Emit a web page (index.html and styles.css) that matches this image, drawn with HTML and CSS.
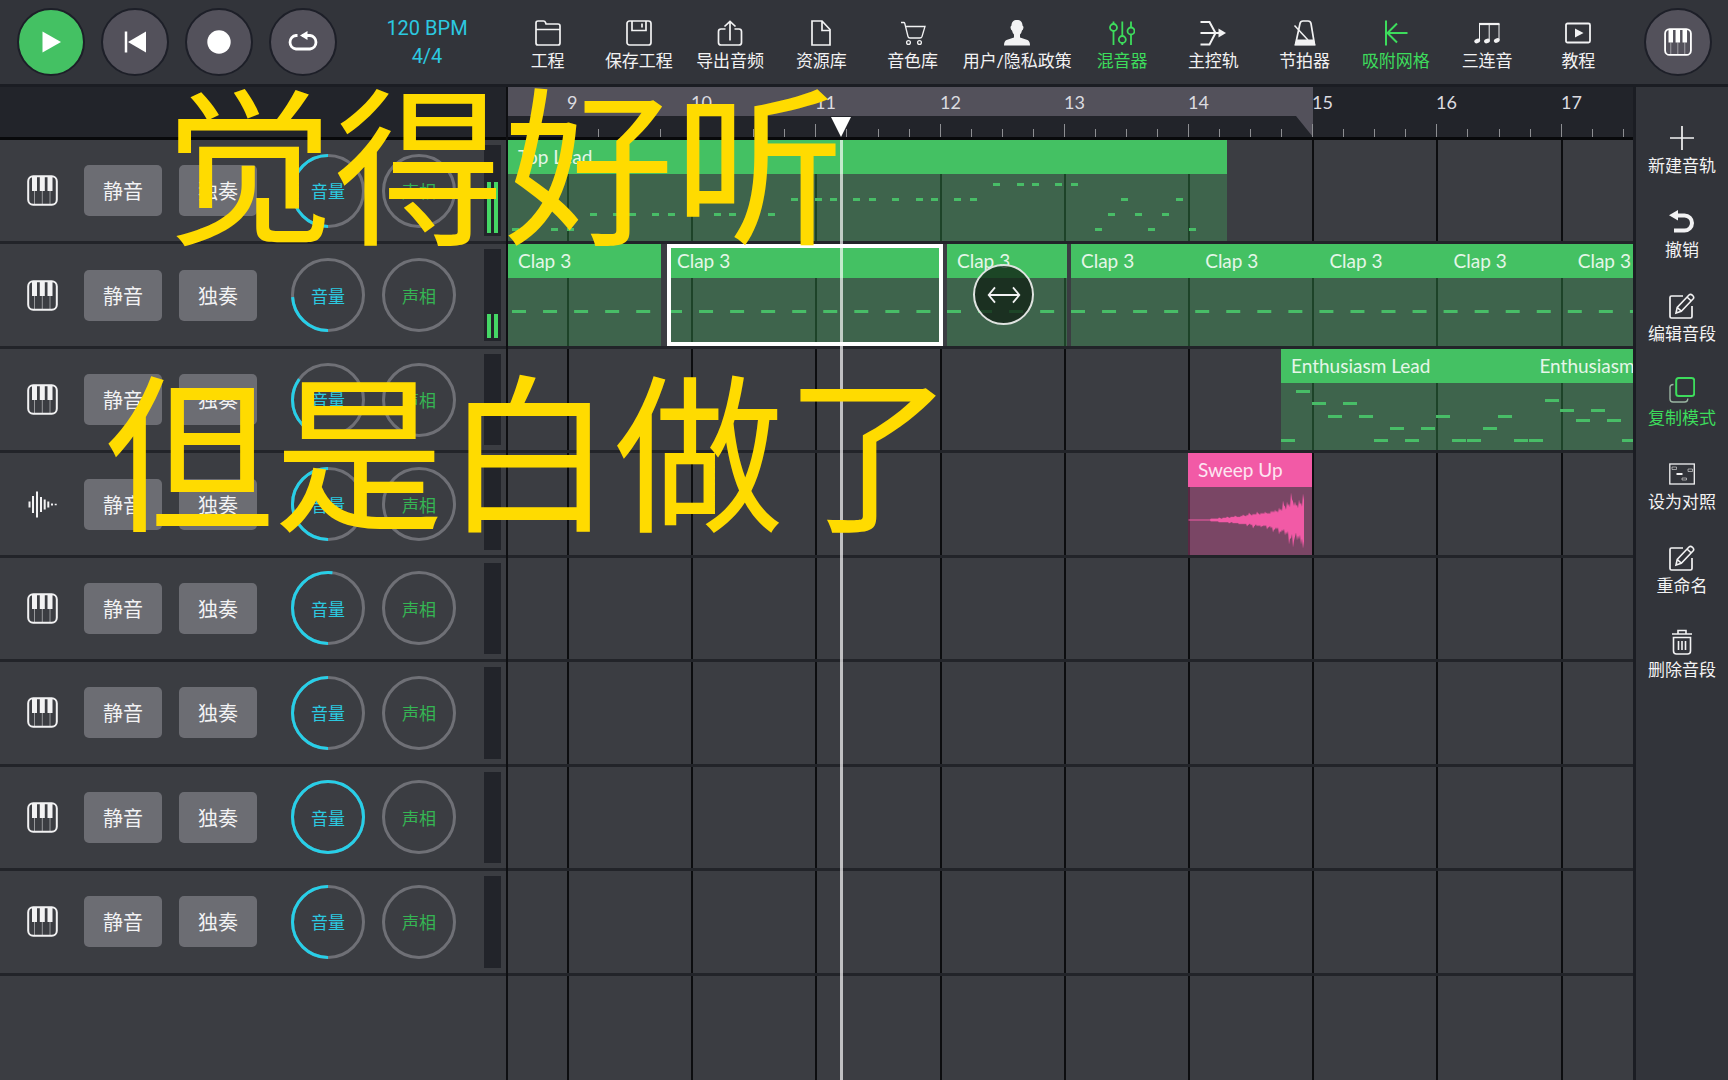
FILE: index.html
```html
<!DOCTYPE html>
<html lang="zh-CN">
<head>
<meta charset="utf-8">
<meta name="viewport" content="width=device-width, initial-scale=1">
<title>音轨编辑</title>
<link rel="stylesheet" href="styles.css">
</head>
<body>
<svg class="defs" aria-hidden="true">
  <symbol id="i-piano" viewBox="0 0 31 31">
    <rect x="1.2" y="1.2" width="28.6" height="28.6" rx="5" fill="none" stroke="currentColor" stroke-width="2"/>
    <path d="M5 1h5v15H5zM12.800 1h5v15h-5zM20.500 1h5v15h-5z" fill="currentColor"/>
    <path d="M7.500 16v13M15.300 16v13M23 16v13" stroke="currentColor" stroke-width="1" opacity=".5"/>
  </symbol>
  <symbol id="i-wave" viewBox="0 0 31 31">
    <path d="M2.500 12.500v6M6 7v17M10 2.500v26M14 8v15M17.700 10.500v10M21.300 12.500v6M25 14.500v2M28.700 14.700v1.600" stroke="currentColor" stroke-width="2"/>
  </symbol>
  <symbol id="i-folder" viewBox="0 0 26 26">
    <path d="M1 22V3Q1 1 3 1H8.500Q10 1 10.500 2.500L11 4H23Q25 4 25 6V23Q25 25 23 25H3Q1 25 1 23V9.500H25" fill="none" stroke="currentColor" stroke-width="1.700"/>
  </symbol>
  <symbol id="i-save" viewBox="0 0 26 26">
    <rect x="1" y="1" width="24" height="24" rx="2.500" fill="none" stroke="currentColor" stroke-width="1.700"/>
    <path d="M6 1v9.500h14V1M16 3.500v4" fill="none" stroke="currentColor" stroke-width="1.700"/>
  </symbol>
  <symbol id="i-export" viewBox="0 0 26 26">
    <path d="M8.500 9H4Q1.500 9 1.500 11.500V22.500Q1.500 25 4 25H22Q24.500 25 24.500 22.500V11.500Q24.500 9 22 9H17.500M13 20.500V1.500M7.500 6.500L13 1.300L18.500 6.500" fill="none" stroke="currentColor" stroke-width="1.700"/>
  </symbol>
  <symbol id="i-file" viewBox="0 0 26 26">
    <path d="M4 1H14L22 9.500V25H4ZM14 1V10.500H22" fill="none" stroke="currentColor" stroke-width="1.700"/>
  </symbol>
  <symbol id="i-cart" viewBox="0 0 26 26">
    <path d="M1 2.500H3.800Q4.500 2.500 4.800 3.500L8 16.500Q8.300 18 10 18H20Q21.500 18 22 16.500L25 6.500H5.700" fill="none" stroke="currentColor" stroke-width="1.300"/>
    <circle cx="8.500" cy="22.500" r="1.900" fill="none" stroke="currentColor" stroke-width="1.300"/>
    <circle cx="19.500" cy="22.500" r="1.900" fill="none" stroke="currentColor" stroke-width="1.300"/>
  </symbol>
  <symbol id="i-user" viewBox="0 0 26 26">
    <path d="M13 0C9.500 0 7.500 2 7.500 5.500Q6.300 6 6.600 8Q7 10 8 10.500Q8.500 13 10 14.500V17.500L2.500 20Q0 21 0 25.500H26Q26 21 23.500 20L16 17.500V14.500Q17.500 13 18 10.500Q19 10 19.400 8Q19.700 6 18.500 5.500C18.500 2 16.500 0 13 0Z" fill="currentColor"/>
  </symbol>
  <symbol id="i-mixer" viewBox="0 0 26 26">
    <path d="M4.500 1.500V4M4.500 11V25M13.300 1.500V16M13.300 23V25M22 1.500V7.500M22 14.500V25" stroke="currentColor" stroke-width="1.800"/>
    <g fill="none" stroke="currentColor" stroke-width="1.800"><circle cx="4.500" cy="7.500" r="3.500"/><circle cx="13.300" cy="19.500" r="3.500"/><circle cx="22" cy="11" r="3.500"/></g>
  </symbol>
  <symbol id="i-master" viewBox="0 0 26 26">
    <path d="M.5 2H9.500L15.500 13L9.500 24.500H.5M.5 13H20" fill="none" stroke="currentColor" stroke-width="2"/>
    <path d="M18.500 8.500L26 13L18.500 17.500Z" fill="currentColor"/>
  </symbol>
  <symbol id="i-metro" viewBox="0 0 26 26">
    <path d="M3.500 24.500L8 3.500Q8.500 1 11 1H16Q18.500 1 19 3.500L22.500 24.500Z" fill="none" stroke="currentColor" stroke-width="1.700"/>
    <path d="M4.500 19.500H21.800L23.500 25.500H2.500Z" fill="currentColor"/>
    <path d="M2.500 5.500L16 20" stroke="currentColor" stroke-width="1.500"/>
  </symbol>
  <symbol id="i-snap" viewBox="0 0 26 26">
    <path d="M3 .5V25.500M3.500 13H24.500M14 3.500L4.500 13L14 22.500" fill="none" stroke="currentColor" stroke-width="2"/>
  </symbol>
  <symbol id="i-triplet" viewBox="0 0 26 26">
    <path d="M5.500 21V4H25V20M15.200 4V20.500" fill="none" stroke="currentColor" stroke-width="1"/>
    <path d="M5 4H25.500" stroke="currentColor" stroke-width="2.200"/>
    <g fill="currentColor"><ellipse cx="3.200" cy="21" rx="3" ry="2.200" transform="rotate(-20 3.200 21)"/><ellipse cx="13" cy="21" rx="3" ry="2.200" transform="rotate(-20 13 21)"/><ellipse cx="22.800" cy="20.500" rx="3" ry="2.200" transform="rotate(-20 22.800 20.500)"/></g>
  </symbol>
  <symbol id="i-video" viewBox="0 0 26 26">
    <rect x="1" y="3.500" width="24" height="19" rx="1.500" fill="none" stroke="currentColor" stroke-width="1.800"/>
    <path d="M10 8.500L18.500 13L10 17.500Z" fill="currentColor"/>
  </symbol>
  <symbol id="i-plus" viewBox="0 0 26 26">
    <path d="M13 1V25M1 13H25" stroke="currentColor" stroke-width="1.700"/>
  </symbol>
  <symbol id="i-undo" viewBox="0 0 26 26">
    <path d="M6 6.500H15.500A7.500 7.500 0 0 1 15.500 21.500H5" fill="none" stroke="currentColor" stroke-width="4"/>
    <path d="M0 6.300L9 1V11.500Z" fill="currentColor"/>
  </symbol>
  <symbol id="i-edit" viewBox="0 0 26 26">
    <path d="M14 3H2.500Q1 3 1 4.500V23.500Q1 25 2.500 25H21.500Q23 25 23 23.500V13" fill="none" stroke="currentColor" stroke-width="1.700"/>
    <path d="M7 20L8.200 14.500L20 2Q21.500 .5 23.500 2.300Q25.500 4.300 24.200 5.800L12.300 18.200ZM18 4L22.300 8M8.200 14.500L12.300 18.200" fill="none" stroke="currentColor" stroke-width="1.600"/>
  </symbol>
  <symbol id="i-copy" viewBox="0 0 26 26">
    <rect x="7.200" y="1" width="18" height="18" rx="2.500" fill="none" stroke="currentColor" stroke-width="2"/>
    <path d="M4.500 7.500Q1 7.500 1 10.500V22Q1 25 4 25H15.500Q18.800 25 18.800 21.500" fill="none" stroke="#9bb5a2" stroke-width="1.400"/>
  </symbol>
  <symbol id="i-compare" viewBox="0 0 26 26">
    <rect x=".8" y="3" width="24.500" height="20" fill="none" stroke="currentColor" stroke-width="1.300"/>
    <path d="M7.500 13H13.500" stroke="currentColor" stroke-width="2"/>
    <path d="M3 6H7.500V8.500H3ZM19 8H23.500V10.500H19ZM13 17H17.500V19H13Z" fill="none" stroke="currentColor" stroke-width=".8" opacity=".7"/>
  </symbol>
  <symbol id="i-trash" viewBox="0 0 26 26">
    <path d="M3 5H23M9 5V1.500H17V5M4.500 8.500H21.500V22Q21.500 25 18.500 25H7.500Q4.500 25 4.500 22ZM9.500 12V21M13 12V21M16.500 12V21" fill="none" stroke="currentColor" stroke-width="1.600"/>
  </symbol>
</svg>

<div class="app">
  <header class="topbar">
    <div class="transport">
      <button class="round play" aria-label="播放"><svg viewBox="0 0 32 32"><path d="M7.500 5.500L26 16L7.500 26.500Z" fill="currentColor"/></svg></button>
      <button class="round" aria-label="回到开头"><svg viewBox="0 0 32 32"><path d="M7 5.500V26.500" stroke="currentColor" stroke-width="2.500"/><path d="M27 5.500V26.500L9 16Z" fill="currentColor"/></svg></button>
      <button class="round" aria-label="录音"><svg viewBox="0 0 32 32"><circle cx="16" cy="16" r="11.700" fill="currentColor"/></svg></button>
      <button class="round" aria-label="循环"><svg viewBox="0 0 32 32"><path d="M10.500 9.500H9A6.800 6.800 0 0 0 9 23H23A6.800 6.800 0 0 0 23 9.500H15" fill="none" stroke="currentColor" stroke-width="2.800"/><path d="M13 9.500L20.500 5V14Z" fill="currentColor"/></svg></button>
    </div>
    <button class="tempo"><span>120 BPM</span><span>4/4</span></button>
    <nav class="tools">
      <button class="tool"><svg><use href="#i-folder"/></svg><span>工程</span></button>
      <button class="tool"><svg><use href="#i-save"/></svg><span>保存工程</span></button>
      <button class="tool"><svg><use href="#i-export"/></svg><span>导出音频</span></button>
      <button class="tool"><svg><use href="#i-file"/></svg><span>资源库</span></button>
      <button class="tool"><svg><use href="#i-cart"/></svg><span>音色库</span></button>
      <button class="tool wide"><svg><use href="#i-user"/></svg><span>用户/隐私政策</span></button>
      <button class="tool on"><svg><use href="#i-mixer"/></svg><span>混音器</span></button>
      <button class="tool"><svg><use href="#i-master"/></svg><span>主控轨</span></button>
      <button class="tool"><svg><use href="#i-metro"/></svg><span>节拍器</span></button>
      <button class="tool on"><svg><use href="#i-snap"/></svg><span>吸附网格</span></button>
      <button class="tool"><svg><use href="#i-triplet"/></svg><span>三连音</span></button>
      <button class="tool"><svg><use href="#i-video"/></svg><span>教程</span></button>
    </nav>
    <button class="round keys" aria-label="键盘"><svg><use href="#i-piano"/></svg></button>
  </header>

  <main class="workspace">
    <section class="rack" aria-label="音轨">
      <div class="corner"></div>
      <div class="rows" id="rack"></div>
    </section>

    <section class="timeline" aria-label="时间线">
      <div class="ruler" id="ruler"><div class="loop"></div></div>
      <div class="rows lanes" id="lanes"></div>
      <div class="playhead"></div>
      <button class="handle" aria-label="调整长度"><svg viewBox="0 0 36 20"><path d="M1 10H35M8 1.500L1 10L8 18.500M28 1.500L35 10L28 18.500" fill="none" stroke="currentColor" stroke-width="2"/></svg></button>
    </section>

    <aside class="side">
      <button class="tool"><svg><use href="#i-plus"/></svg><span>新建音轨</span></button>
      <button class="tool"><svg><use href="#i-undo"/></svg><span>撤销</span></button>
      <button class="tool"><svg><use href="#i-edit"/></svg><span>编辑音段</span></button>
      <button class="tool on"><svg><use href="#i-copy"/></svg><span>复制模式</span></button>
      <button class="tool"><svg><use href="#i-compare"/></svg><span>设为对照</span></button>
      <button class="tool"><svg><use href="#i-edit"/></svg><span>重命名</span></button>
      <button class="tool"><svg><use href="#i-trash"/></svg><span>删除音段</span></button>
    </aside>
  </main>

  <p class="caption first">觉得好听</p>
  <p class="caption second">但是白做了</p>
</div>
<script src="app.js"></script>
</body>
</html>
```
FILE: styles.css
```css
:root {
  --bar: #32343a;
  --row: #3b3d42;
  --deep: #22242a;
  --edge: #1b1d23;
  --pad: #53515b;
  --green: #44c163;
  --lit: #3ddc5c;
  --cyan: #2cc9e0;
  --pink: #f25aa6;
  --ink: #f2f2f3;
}

* { box-sizing: border-box; }

body {
  margin: 0;
  background: var(--row);
  color: var(--ink);
  font-family: Roboto, "Noto Sans CJK SC", sans-serif;
}

button {
  margin: 0;
  padding: 0;
  border: 0;
  background: none;
  color: inherit;
  font: inherit;
  cursor: pointer;
}

svg { display: block; }
.defs { position: absolute; width: 0; height: 0; }

.app {
  position: relative;
  display: flex;
  flex-direction: column;
  height: 100vh;
  min-height: 800px;
  overflow: hidden;
}

/* top bar */
.topbar {
  display: flex;
  align-items: center;
  height: 87px;
  padding: 0 16px 0 17px;
  background: var(--bar);
  border-bottom: 3px solid var(--edge);
}
.transport { display: flex; gap: 16px; }
.round {
  display: grid;
  place-items: center;
  flex: none;
  width: 68px;
  height: 68px;
  border: 2px solid #1d1f28;
  border-radius: 50%;
  background: var(--pad);
  color: #fff;
}
.round svg { width: 32px; height: 32px; }
.round.keys svg { width: 28px; height: 28px; }
.play { background: var(--green); }
.tempo {
  display: flex;
  flex-direction: column;
  width: 165px;
  padding-left: 15px;
  color: var(--cyan);
  font-size: 20px;
  line-height: 28px;
}
.tools { display: flex; flex: 1; padding: 7px 20px 0 0; }

.tool {
  display: flex;
  flex: 1 1 91px;
  flex-direction: column;
  align-items: center;
  gap: 5px;
  font-size: 17px;
  line-height: 20px;
  white-space: nowrap;
}
.tool svg { width: 26px; height: 26px; }
.tool.wide { flex-basis: 118px; }
.tool.on { color: var(--lit); }

/* workspace */
.workspace { display: flex; flex: 1; min-height: 0; }
.rack {
  display: flex;
  flex: none;
  flex-direction: column;
  width: 508px;
  border-right: 2px solid #0e0f12;
}
.corner, .ruler {
  flex: none;
  height: 53px;
  background: var(--deep);
  border-bottom: 3px solid #08090b;
}
.rows {
  display: grid;
  flex: 1;
  grid-template-rows: repeat(9, 1fr);
  min-height: 0;
}
.track, .lane { min-height: 0; border-bottom: 3px solid #222429; }
.track {
  display: flex;
  align-items: center;
  padding: 0 5px 0 27px;
}
.track > svg { flex: none; width: 31px; height: 31px; margin-right: 26px; }
.toggle {
  width: 78px;
  height: 51px;
  margin-right: 17px;
  border-radius: 5px;
  background: #6c6d73;
  font-size: 20px;
}
.knob {
  position: relative;
  display: grid;
  place-items: center;
  width: 74px;
  height: 74px;
  margin-left: 17px;
  font-size: 17px;
  color: var(--cyan);
}
.knob.pan { color: #35b553; }
.knob svg, .knob input { position: absolute; inset: 0; width: 100%; height: 100%; margin: 0; }
.knob input { opacity: 0; }
.knob circle { fill: none; stroke: #6f7076; stroke-width: 3; }
.knob .arc { stroke: #27cfe8; }
.meter {
  display: flex;
  align-items: flex-end;
  align-self: stretch;
  gap: 3px;
  width: 17px;
  margin: 5px 0 5px auto;
  padding: 3px;
  background: var(--deep);
}
.meter i { flex: 1; background: #45d765; }

/* timeline */
.timeline {
  position: relative;
  display: flex;
  flex: 1;
  flex-direction: column;
  min-width: 0;
  overflow: hidden;
}
.ruler { position: relative; font: 18px/20px Lato, sans-serif; }
.loop {
  width: 805px;
  height: 50px;
  background: var(--pad);
  clip-path: polygon(0 0, 100% 0, 100% 100%, calc(100% - 17px) 29px, 0 29px);
}
.tick {
  position: absolute;
  bottom: 0;
  width: 1px;
  height: 8px;
  background: #8d8e92;
}
.tick.major { height: 13px; }
.num { position: absolute; top: 5px; color: #dcdce0; }
.lanes { position: relative; }
.gridline {
  position: absolute;
  top: 0;
  bottom: 0;
  width: 2px;
  background: #0c0d0f;
}
.lane { position: relative; }
.clip {
  position: absolute;
  top: 0;
  bottom: 0;
  overflow: hidden;
  background: rgb(68 193 99 / 30%);
}
.clip header {
  display: flex;
  height: 34px;
  padding-left: 10px;
  background: var(--green);
  font: 19px/34px Lato, sans-serif;
  color: #e4f6e8;
  white-space: nowrap;
}
.clip header span { flex: none; }
.clip svg { width: 100%; overflow: visible; }
.clip rect { fill: #48bd67; }
.clip.audio { background: rgb(242 90 166 / 35%); }
.clip.audio header { background: var(--pink); color: #fde6f2; }
.clip.audio path { fill: var(--pink); }
.clip.selected::after {
  content: "";
  position: absolute;
  inset: 0;
  border: 4px solid #fff;
}
.playhead {
  position: absolute;
  top: 53px;
  bottom: 0;
  left: 332px;
  width: 3px;
  background: rgb(255 255 255 / 68%);
}
.playhead::before {
  content: "";
  position: absolute;
  top: -23px;
  left: -9px;
  width: 20px;
  height: 20px;
  background: #fff;
  clip-path: polygon(0 0, 100% 0, 50% 100%);
}
.handle {
  position: absolute;
  top: 177px;
  left: 465px;
  display: grid;
  place-items: center;
  width: 61px;
  height: 61px;
  border: 2px solid #dfe3e0;
  border-radius: 50%;
  background: rgb(16 32 20 / 76%);
}
.handle svg { width: 36px; height: 18px; }

/* side bar */
.side {
  display: flex;
  flex: none;
  flex-direction: column;
  gap: 33px;
  width: 95px;
  padding-top: 38px;
  background: var(--bar);
  border-left: 3px solid var(--edge);
}
.side .tool { flex: none; }

/* captions over the whole screen */
.caption {
  position: absolute;
  margin: 0;
  color: #ffdb00;
  font: 170px/170px "Noto Sans CJK SC", sans-serif;
  white-space: nowrap;
  pointer-events: none;
}
.first { top: 73px; left: 164px; }
.second { top: 360px; left: 104px; }
```
FILE: app.js
```js
const BAR = 124.2;          // pixels per bar
const FIRST_BAR = 59;       // x of bar 9
const NS = 'http://www.w3.org/2000/svg';

const pairs = (w, y, xs) => xs.map(x => [x, y, w]);
const steps = (from, count) => Array.from({ length: count }, (_, i) => [from + i * BAR / 4, 33, 14]);

const tracks = [
  { volume: 50, meter: 51, clips: [{ x: 0, w: 719, name: 'Top Lead', notes: [
    ...pairs(7, 10, [485, 509, 524, 547, 563]),
    ...pairs(7, 25, [283, 307, 322, 345, 361, 384, 408, 423, 446, 462, 613, 668]),
    ...pairs(7, 40, [82, 105, 121, 144, 160, 206, 221, 260, 600, 627, 654]),
    ...pairs(7, 55, [4, 43, 59, 587, 640, 681])] }] },
  { volume: 24, meter: 24, clips: [
    { x: 0, w: 153, name: 'Clap 3', notes: steps(4, 5) },
    { x: 159, w: 276, name: 'Clap 3', selected: true, notes: steps(1, 9) },
    { x: 439, w: 120, name: 'Clap 3', notes: steps(0, 4) },
    { x: 563, w: 621, name: 'Clap 3', loop: BAR, notes: steps(0, 20) }] },
  { volume: 35, clips: [{ x: 773, w: 497, name: 'Enthusiasm Lead', loop: BAR * 2, notes: [
    [0, 57], [15, 8], [31, 20], [47, 33], [62, 20], [78, 33], [93, 57], [109, 45], [124, 57],
    [140, 45], [155, 33], [171, 57], [186, 57], [202, 45], [217, 33], [233, 57], [248, 57],
    [264, 17], [279, 27], [295, 37], [310, 27], [326, 37], [341, 57]].map(n => [...n, 14]) }] },
  { volume: 50, audio: true, clips: [{ x: 680, w: 124, name: 'Sweep Up', wave: true }] },
  { volume: 52, clips: [] },
  { volume: 50, clips: [] },
  { volume: 100, clips: [] },
  { volume: 50, clips: [] }
];

const knob = (label, cls, value) => `
  <label class="knob ${cls}">
    <svg viewBox="0 0 74 74" aria-hidden="true">
      <circle cx="37" cy="37" r="35.5"/>
      ${cls === 'vol' ? `<circle class="arc" cx="37" cy="37" r="35.5" pathLength="100" stroke-dasharray="${value} ${100 - value}" transform="rotate(90 37 37)"/>` : ''}
    </svg>
    <span>${label}</span>
    <input type="range" min="0" max="100" value="${value}">
  </label>`;

// Peaks of the riser sample, one pair (up, down) every 2px
const peaks = [[0,0],[0,0],[0,0],[0,0],[0,0],[0,0],[0,0],[0,0],[0,0],[0,0],[0,0],[1,1],[1,1],[1,1],[1,1],[2,2],
  [1,2],[2,2],[2,2],[3,2],[2,3],[3,2],[3,3],[4,3],[3,3],[3,4],[4,4],[5,4],[4,4],[5,6],[7,4],[5,5],[6,8],[6,5],[8,6],
  [6,6],[7,7],[7,6],[8,6],[7,9],[7,7],[9,8],[9,12],[10,9],[9,9],[12,14],[11,12],[19,11],[13,15],[18,14],[16,24],[27,18],
  [18,27],[18,16],[15,20],[20,19],[17,24],[26,28]];

function wavePath() {
  const mid = 33;
  let up = `M0 ${mid}`, down = '';
  peaks.forEach(([a, b], i) => {
    const x = i * 2 + 1;
    up += `L${x} ${mid - a - 0.4}L${x + 1} ${mid - a * 0.75 - 0.4}`;
    down = `L${x + 1} ${mid + b * 0.75 + 0.4}L${x} ${mid + b + 0.4}` + down;
  });
  return `<path d="${up}${down}Z"/>`;
}

function clipMarkup(c) {
  const count = c.loop ? Math.round(c.w / c.loop) : 1;
  const labels = Array.from({ length: count }, () =>
    `<span${c.loop ? ` style="width:${c.loop}px"` : ''}>${c.name}</span>`).join('');
  const body = c.wave ? wavePath() :
    c.notes.map(([x, y, w]) => `<rect x="${x}" y="${y - 1}" width="${w}" height="3"/>`).join('');
  return `<article class="clip${c.selected ? ' selected' : ''}${c.wave ? ' audio' : ''}" style="left:${c.x}px;width:${c.w}px">
    <header>${labels}</header><svg height="68" xmlns="${NS}">${body}</svg></article>`;
}

document.getElementById('rack').innerHTML = tracks.map(t => `
  <div class="track">
    <svg aria-hidden="true"><use href="#${t.audio ? 'i-wave' : 'i-piano'}"/></svg>
    <button class="toggle">静音</button>
    <button class="toggle">独奏</button>
    ${knob('音量', 'vol', t.volume)}
    ${knob('声相', 'pan', 50)}
    <div class="meter">${t.meter ? `<i style="height:${t.meter}px"></i><i style="height:${t.meter}px"></i>` : ''}</div>
  </div>`).join('');

let grid = '', ruler = '';
for (let q = -1; q < 36; q++) {
  const x = Math.round(FIRST_BAR + q * BAR / 4);
  const major = q % 4 === 0;
  ruler += `<i class="tick${major ? ' major' : ''}" style="left:${x}px"></i>`;
  if (major) {
    ruler += `<span class="num" style="left:${x}px">${9 + q / 4}</span>`;
    grid += `<i class="gridline" style="left:${x}px"></i>`;
  }
}
document.getElementById('ruler').insertAdjacentHTML('beforeend', ruler);
document.getElementById('lanes').innerHTML = grid + tracks.map(t =>
  `<div class="lane">${t.clips.map(clipMarkup).join('')}</div>`).join('');
```
